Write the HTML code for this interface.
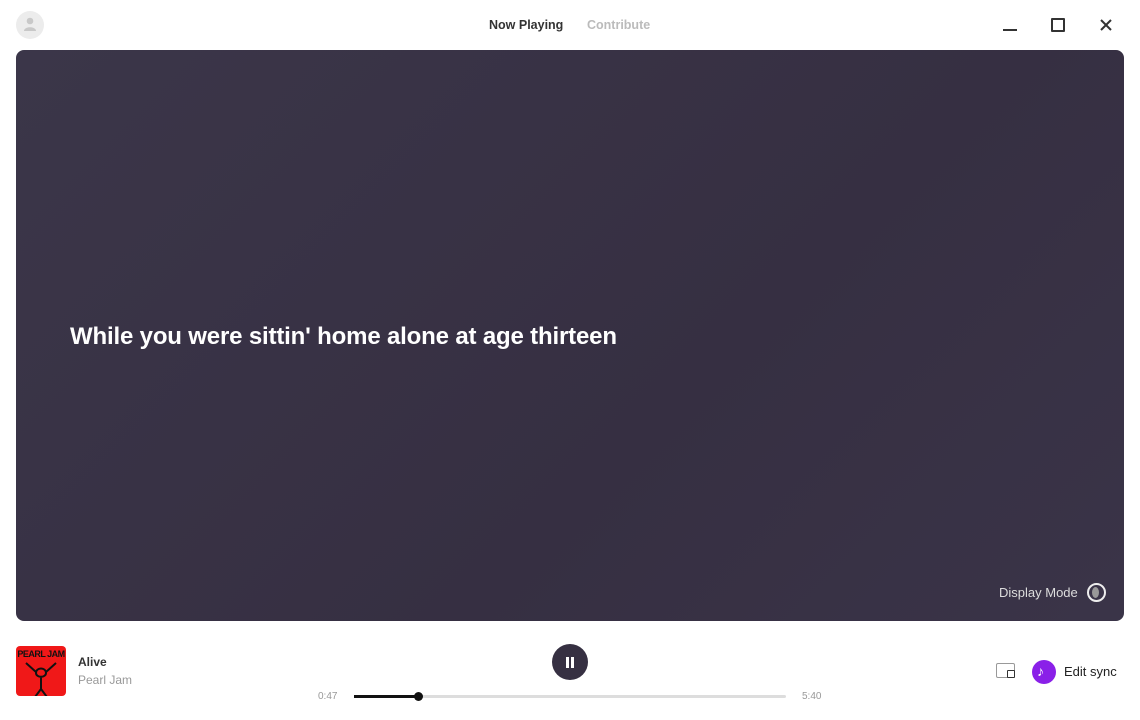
<!DOCTYPE html>
<html><head><style>
body{margin:0;width:1140px;height:720px;background:#fff;font-family:"Liberation Sans","DejaVu Sans",sans-serif;position:relative;overflow:hidden}
.a{position:absolute}
</style></head><body>
<div class="a" style="left:16px;top:11px;width:28px;height:28px;border-radius:50%;background:#ececec"></div>
<svg class="a" style="left:22px;top:16px" width="16" height="16" viewBox="0 0 16 16"><circle cx="8" cy="5" r="3.3" fill="#c8c8c8"/><path d="M2 15 C2 10 14 10 14 15Z" fill="#c8c8c8"/></svg>
<div class="a" style="left:489px;top:18px;font-size:12.5px;font-weight:bold;color:#333">Now Playing</div>
<div class="a" style="left:587px;top:18px;font-size:12.5px;font-weight:bold;color:#bbb">Contribute</div>
<div class="a" style="left:1003px;top:29px;width:14px;height:2px;background:#333"></div>
<div class="a" style="left:1051px;top:18px;width:10px;height:10px;border:2px solid #333;border-radius:1px"></div>
<svg class="a" style="left:1099px;top:18px" width="14" height="14"><path d="M2 2L12 12M12 2L2 12" stroke="#333" stroke-width="2"/></svg>
<div class="a" style="left:16px;top:50px;width:1108px;height:571px;border-radius:8px;background:linear-gradient(135deg,#3b3649,#362f42 60%,#3a3448)"></div>
<div class="a" style="left:70px;top:323px;font-size:24px;font-weight:bold;color:#fff;letter-spacing:-0.17px">While you were sittin' home alone at age thirteen</div>
<div class="a" style="left:999px;top:585px;font-size:13px;color:#ddd">Display Mode</div>
<div class="a" style="left:1087px;top:583px;width:15px;height:15px;border:2px solid #eee;border-radius:50%"></div>
<div class="a" style="left:1092px;top:587px;width:7px;height:11px;border-radius:50%;background:#999"></div>
<div class="a" style="left:16px;top:646px;width:50px;height:50px;border-radius:4px;background:#f01818;overflow:hidden">
<div style="font-size:9px;font-weight:bold;color:#111;text-align:center;margin-top:3px;letter-spacing:-0.5px">PEARL JAM</div>
<svg width="50" height="40"><g stroke="#111" stroke-width="2" fill="none"><path d="M25 18L25 30M25 30L19 38M25 30L31 38M20 14C20 8 30 8 30 14C30 19 20 19 20 14M20 13L10 4M30 13L40 4"/></g></svg></div>
<div class="a" style="left:78px;top:655px;font-size:12px;font-weight:bold;color:#333">Alive</div>
<div class="a" style="left:78px;top:673px;font-size:12px;color:#999">Pearl Jam</div>
<div class="a" style="left:552px;top:644px;width:36px;height:36px;border-radius:50%;background:#363042"></div>
<div class="a" style="left:566px;top:657px;width:3px;height:11px;background:#fff"></div>
<div class="a" style="left:571px;top:657px;width:3px;height:11px;background:#fff"></div>
<div class="a" style="left:318px;top:691px;font-size:10px;color:#999">0:47</div>
<div class="a" style="left:354px;top:695px;width:432px;height:3px;background:#ddd;border-radius:2px"></div>
<div class="a" style="left:354px;top:695px;width:64px;height:3px;background:#111"></div>
<div class="a" style="left:414px;top:692px;width:9px;height:9px;border-radius:50%;background:#111"></div>
<div class="a" style="left:802px;top:691px;font-size:10px;color:#999">5:40</div>
<div class="a" style="left:996px;top:663px;width:17px;height:13px;border:1.5px solid #999;border-radius:2px"></div>
<div class="a" style="left:1007px;top:670px;width:6px;height:6px;border:1.5px solid #333;background:#fff;border-radius:1px"></div>
<div class="a" style="left:1032px;top:660px;width:24px;height:24px;border-radius:50%;background:#8a20e8"></div>
<div class="a" style="left:1037px;top:663px;font-size:14px;color:#fff;font-style:italic">♪</div>
<div class="a" style="left:1064px;top:664px;font-size:13px;color:#222">Edit sync</div>
</body></html>
